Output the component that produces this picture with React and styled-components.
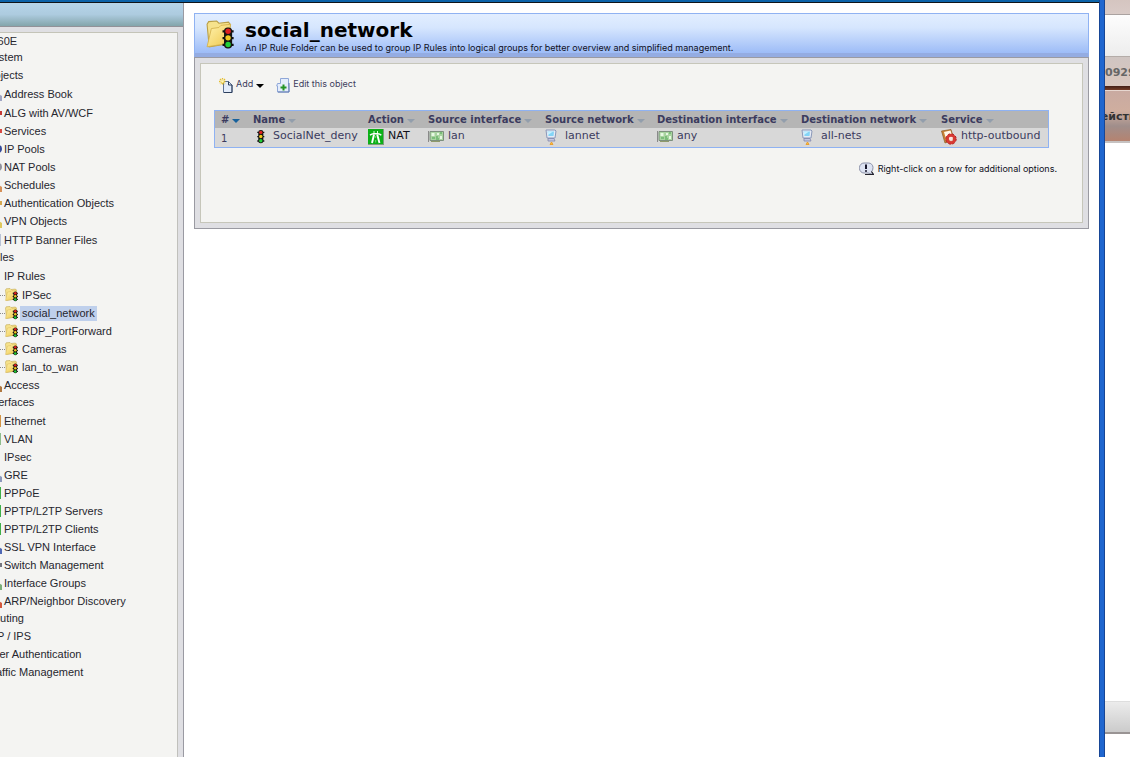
import React from "react";
import styled, { createGlobalStyle } from "styled-components";

const GlobalStyle = createGlobalStyle`
  * { box-sizing: border-box; }
  body {
    margin: 0;
    background: #fff;
    color: #2b2b3c;
    font-family: "Liberation Sans", Arial, sans-serif;
    font-size: 11px;
  }
`;

const Desktop = styled.div`
  display: flex;
  min-height: 100vh;
  overflow: hidden;
`;

const BrowserWindow = styled.div`
  flex: 1;
  min-width: 0;
  display: flex;
  flex-direction: column;
`;

const WindowEdge = styled.div`
  width: 6px;
  flex: none;
  background: #1f66cf;
  border-left: 1px solid #174696;
  border-right: 1px solid #174696;
`;

const TopBar = styled.div`
  height: 3px;
  background: #0b62a8;
  border-bottom: 1px solid #101418;
`;

const Columns = styled.div`
  flex: 1;
  display: flex;
`;

const Sidebar = styled.aside`
  width: 184px;
  flex: none;
  display: flex;
  flex-direction: column;
  overflow: hidden;
  background: #dfdfe3;
  border-right: 1px solid #9a9aa2;
`;

const SidebarHeader = styled.div`
  height: 24px;
  flex: none;
  background: linear-gradient(#b6d5e9, #adcbdf 50%, #83a5ab);
  border-bottom: 1px solid #929298;
`;

const TreePanel = styled.nav`
  flex: 1;
  margin: 5px 5px 0 0;
  padding-top: 1px;
  overflow: hidden;
  background: #f4f4f2;
  border-top: 1px solid #c4c4b8;
  border-right: 1px solid #c0c0bc;
`;

const TreeList = styled.ul`
  list-style: none;
  margin: 0 0 0 -14px;
  padding: 0;
`;

const TreeRow = styled.li`
  display: flex;
  align-items: center;
  height: ${(p) => (p.$root ? 15 : p.$tall ? 19 : 18)}px;
  padding-top: ${(p) => (p.$tall ? 1 : 0)}px;
  padding-bottom: ${(p) => (p.$level === 0 && !p.$root ? 2 : 0)}px;
  margin-left: ${(p) => (p.$root ? -19 : 0)}px;
  white-space: nowrap;
`;

const TreeIcon = styled.span`
  display: flex;
  justify-content: flex-end;
  width: 16px;
  flex: none;
`;

const Branch = styled.span`
  display: flex;
  align-items: center;
  width: 34px;
  flex: none;
  padding-left: 14px;
`;

const Dots = styled.span`
  width: 5px;
  border-top: 1px dotted #8c8c8c;
`;

const TreeLink = styled.a`
  color: #26262e;
  text-decoration: none;
  line-height: 15px;
  padding: 0 2px;
  margin-left: ${(p) => (p.$flush ? -2 : 0)}px;
  background: ${(p) => (p.$selected ? "#bfd0ec" : "transparent")};
`;

const Main = styled.main`
  flex: 1;
  min-width: 0;
  padding: 10px 10px 0;
`;

const PageHeader = styled.header`
  display: flex;
  height: 44px;
  padding: 6px 10px 0 11px;
  gap: 9px;
  border: 1px solid #8fb2f2;
  border-bottom: 4px solid #94ace2;
  background: linear-gradient(#e2eeff, #d6e6fe 35%, #9dbcf7);
`;

const Title = styled.h1`
  margin: 0;
  color: #000;
  font: bold 20px/21px "DejaVu Sans", Verdana, sans-serif;
`;

const Subtitle = styled.p`
  margin: 0;
  color: #10101c;
  font: 9px/13px Inter, "Liberation Sans", sans-serif;
`;

const Frame = styled.section`
  padding: 5px;
  background: #dfdfe3;
  border: 1px solid #9a9aa2;
`;

const Panel = styled.div`
  min-height: 160px;
  padding: 11px 33px 0 13px;
  background: #f4f4f2;
  border: 1px solid #c6c6ba;
`;

const Toolbar = styled.div`
  display: flex;
  gap: 12px;
  padding-left: 5px;
  height: 35px;
`;

const ToolButton = styled.button`
  display: flex;
  align-items: flex-start;
  gap: 3px;
  height: 18px;
  margin: 0;
  padding: 0;
  border: 0;
  background: none;
  color: #3c3c5c;
  font: 9px/18px Inter, "Liberation Sans", sans-serif;

  svg { margin-top: 3px; }
  svg + svg { margin-top: 7px; }
`;

const RuleTable = styled.table`
  width: 100%;
  table-layout: fixed;
  border: 1px solid #8fb2f2;
  border-collapse: separate;
  border-spacing: 0;
  white-space: nowrap;
`;

const Col = styled.col`
  width: ${(p) => (p.$w ? `${p.$w}px` : "auto")};
`;

const HeadCell = styled.th`
  height: 17px;
  padding: 0 0 0 6px;
  background: #b5b5b5;
  text-align: left;
`;

const SortButton = styled.button`
  display: flex;
  align-items: center;
  gap: 3px;
  padding: 0;
  border: 0;
  background: none;
  color: #3b3b5e;
  font: bold 10px/16px "DejaVu Sans", Verdana, sans-serif;
`;

const Cell = styled.td`
  height: 19px;
  padding: 0 0 0 6px;
  vertical-align: ${(p) => (p.$low ? "bottom" : "top")};
  background: #d8d8d8;
  color: ${(p) => (p.$dark ? "#101018" : "#3b3b5e")};
  font: ${(p) => (p.$low ? 10 : 11)}px/16px "DejaVu Sans", Verdana, sans-serif;
`;

const CellBody = styled.div`
  display: flex;
  align-items: flex-start;
  gap: ${(p) => p.$gap || 4}px;
  height: 18px;

  svg { margin-top: 1px; }
`;

const Hint = styled.p`
  display: flex;
  align-items: center;
  justify-content: flex-end;
  gap: 4px;
  margin: 13px -8px 0 0;
  color: #10101c;
  font: 9px/16px Inter, "Liberation Sans", sans-serif;
`;

const BehindPage = styled.aside`
  width: 25px;
  flex: none;
  overflow: hidden;
  display: flex;
  flex-direction: column;
  white-space: nowrap;
`;

const SkyStrip = styled.div`
  height: 15px;
  background: linear-gradient(#d5c5c0, #d9cbc7);
  border-bottom: 1px solid #aaa2a0;
`;

const LightStrip = styled.div`
  height: 42px;
  background: linear-gradient(#fdfdfd, #ededed);
  border-bottom: 1px solid #b4aca8;
`;

const PhoneStrip = styled.div`
  height: 29px;
  color: #666;
  background: linear-gradient(#cfc5c2, #dac7be);
  font: bold 11px/32px "DejaVu Sans", Verdana, sans-serif;
`;

const DarkStrip = styled.div`
  height: 5px;
  background: linear-gradient(#431f16, #753c26);
  border-bottom: 1px solid #e7d7d0;
`;

const MenuStrip = styled.div`
  height: 52px;
  display: flex;
  color: #333;
  background: linear-gradient(#c9aaa1, #cfae9f 40%, #a08e8b 70%, #b58370);
  border-bottom: 2px solid #c6c2c1;
  font: bold 11px/52px "DejaVu Sans", Verdana, sans-serif;
`;

const MenuText = styled.span`
  margin-left: -14px;
`;

const Blank = styled.div`
  flex: 1;
`;

const FooterStrip = styled.div`
  height: 33px;
  margin-bottom: 23px;
  background: linear-gradient(#ececec, #cbcbcb);
  border-top: 1px solid #dedede;
  border-bottom: 2px solid #999494;
`;

function Lights({ x = 0, y = 0, s = 1 }) {
  return (
    <g transform={`translate(${x} ${y}) scale(${s})`}>
      <path d="M.3 2.500h7.400M.3 7h7.400M.3 11.500h7.400" stroke="#111" strokeWidth="1.500" />
      <rect x="1.300" y="0" width="5.400" height="14" rx="2.500" fill="#151510" />
      <circle cx="4" cy="2.500" r="1.800" fill="#e02020" />
      <circle cx="4" cy="6.900" r="1.800" fill="#f0c820" />
      <circle cx="4" cy="11.300" r="1.800" fill="#22d038" />
    </g>
  );
}

function FolderIcon({ size }) {
  return (
    <svg width={size} height={size} viewBox="0 0 28 28">
      <defs>
        <linearGradient id="folder" x1="0" y1="0" x2="1" y2="1">
          <stop offset="0" stopColor="#fff3b0" />
          <stop offset="1" stopColor="#eec648" />
        </linearGradient>
      </defs>
      <path d="M1 4 2.500 1.500 10 1l2 2 9-1 1.500 2-1 18L3 25z" fill="#f6e28c" stroke="#b99e45" />
      <path d="M1 25 5 8l7-1 2-2 9-1-3 18z" fill="url(#folder)" stroke="#d3b14c" strokeWidth=".8" />
      <Lights x={15} y={7} s={1.400} />
    </svg>
  );
}

function TrafficIcon() {
  return (
    <svg width="16" height="16" viewBox="0 0 16 16">
      <Lights x={4} y={1} s={0.950} />
    </svg>
  );
}

function NatIcon() {
  return (
    <svg width="16" height="16" viewBox="0 0 16 16">
      <rect width="16" height="16" fill="#7c9c7c" />
      <rect width="15" height="15" fill="#0db018" />
      <path d="M6 5.500 4 14M9.200 5.500 11.500 14" stroke="#fff" strokeWidth="1.900" />
      <path d="M2 6.200q2-1.500 3.500-1.500h4.300q2 0 3.500 1.500" fill="none" stroke="#fff" strokeWidth="1.500" />
      <path d="M6 2v2M9.500 2v2" stroke="#d7ffd7" />
      <path d="M7.700 7v2M7.700 11v2.500" stroke="#6fd873" />
    </svg>
  );
}

function CardIcon() {
  return (
    <svg width="16" height="14" viewBox="0 0 16 14">
      <path d="M.5 2v11" stroke="#8a8a8a" />
      <path d="M2 2.500h13.500v9H2z" fill="#a9d4a0" stroke="#7d907d" />
      <path d="M3.500 4h3v3h-3zM9 4h2v2H9zM12 7h2v3h-2z" fill="#e7f8e2" />
      <path d="M4 9h3M8 8h2M8 10h3M12 4h2" stroke="#4fa552" strokeWidth="1.200" />
      <path d="M3 12.500h9" stroke="#8f9a6a" />
    </svg>
  );
}

function NetworkIcon() {
  return (
    <svg width="12" height="16" viewBox="0 0 12 16">
      <path d="M1 1h9l1 1-1 7H2z" fill="#e6ebf5" stroke="#8a98b8" />
      <path d="M2.500 2.500H9L8.500 7h-5z" fill="#83d4f6" />
      <path d="M3 6 8 2.500H3z" fill="#c6f0ff" />
      <path d="M3 9.500h6l1 2.500H3z" fill="#c3c7e0" stroke="#8085ac" strokeWidth=".8" />
      <path d="M5 15.500 6.500 13 8 15.500z" fill="#ffc83c" stroke="#e79420" strokeWidth=".8" />
    </svg>
  );
}

function ServiceIcon() {
  return (
    <svg width="16" height="16" viewBox="0 0 16 16">
      <path d="M.5 2 10 .5l3 10L4 14z" fill="#c98536" stroke="#8a5a28" strokeWidth=".7" />
      <path d="M3 3 9.500 1.500 12 9l-6.500 2.500z" fill="#fff8ea" />
      <circle cx="10" cy="10" r="3.700" fill="none" stroke="#d83a34" strokeWidth="3" />
      <circle cx="10" cy="10" r="5.200" fill="none" stroke="#b32525" strokeWidth="1" strokeDasharray="2.400 1.700" />
      <circle cx="10" cy="10" r="1.900" fill="#fbe4e0" />
    </svg>
  );
}

function HintIcon() {
  return (
    <svg width="15" height="14" viewBox="0 0 15 14">
      <path d="M5 1h4.500A4.500 4.500 0 0 1 14 5.500q0 3-1.500 4l2 3L9 11H5A4.500 4.500 0 0 1 .5 6.500v-1A4.500 4.500 0 0 1 5 1z" fill="#dde3f2" stroke="#8b91a8" />
      <path d="M6 12.500h8.500l-2-3" fill="none" stroke="#22222c" strokeWidth="1.200" />
      <path d="M7 2.500v4.500M7 8.200v1.600" stroke="#15152a" strokeWidth="2" />
    </svg>
  );
}

function AddIcon() {
  return (
    <svg width="14" height="15" viewBox="0 0 14 15">
      <path d="M4.500 3.500h5l3.500 3.500v7.500H4.500z" fill="#e3ecfa" stroke="#5d7192" />
      <path d="M9.500 3.500V7H13v7.500H5" fill="none" stroke="#2c3f5c" />
      <path d="M3.500 0v7M0 3.500h7M1 1l5 5M6 1 1 6" stroke="#e4bd2c" strokeWidth="1.300" strokeDasharray="1.500 .7" />
      <circle cx="3.500" cy="3.500" r="1.300" fill="#fff8b8" />
    </svg>
  );
}

function EditIcon() {
  return (
    <svg width="14" height="15" viewBox="0 0 14 15">
      <path d="M4.500.5h8v3.500l.5 10H1.500V8H.7L1.500 5.500h3z" fill="#e4edfc" stroke="#8fa7d8" />
      <path d="M2 14h11V5" fill="none" stroke="#5f79b0" />
      <path d="M7.500 6.500v6M4.500 9.500h6" stroke="#259425" strokeWidth="2" />
    </svg>
  );
}

function Arrow({ color }) {
  return (
    <svg width="8" height="6" viewBox="0 0 8 6">
      <path d="M0 2h8L4 6z" fill={color} />
    </svg>
  );
}

function EdgeIcon({ color, kind }) {
  const shapes = {
    foot: <path d="M13 8 16 10v5h-4z" />,
    box: <rect x="10" y="2" width="5" height="12" />,
    dot: <circle cx="12" cy="8" r="4" />,
    small: <path d="M12 6h4v4h-4z" />,
  };
  return (
    <svg width="16" height="16" viewBox="0 0 16 16" fill={color}>
      {shapes[kind]}
    </svg>
  );
}

const tree = [
  { label: "DFL-260E", level: 0, root: true },
  { label: "System", level: 0 },
  { label: "Objects", level: 0 },
  { label: "Address Book", color: "#a0a5c4", kind: "foot" },
  { label: "ALG with AV/WCF", color: "#c63a34", kind: "small", tall: true },
  { label: "Services", color: "#d84a42", kind: "small" },
  { label: "IP Pools", color: "#344a9a", kind: "dot" },
  { label: "NAT Pools", color: "#92929c", kind: "dot" },
  { label: "Schedules", color: "#d69058", kind: "foot" },
  { label: "Authentication Objects", color: "#d6a850", kind: "small" },
  { label: "VPN Objects", color: "#dfc85c", kind: "foot" },
  { label: "HTTP Banner Files", color: "#b9c3d6", kind: "box", tall: true },
  { label: "Rules", level: 0 },
  { label: "IP Rules" },
  { label: "IPSec", level: 2, tall: true },
  { label: "social_network", level: 2, selected: true },
  { label: "RDP_PortForward", level: 2 },
  { label: "Cameras", level: 2 },
  { label: "lan_to_wan", level: 2 },
  { label: "Access", color: "#b07840", kind: "foot" },
  { label: "Interfaces", level: 0 },
  { label: "Ethernet", color: "#d39445", kind: "box" },
  { label: "VLAN", color: "#8fbd8c", kind: "box" },
  { label: "IPsec" },
  { label: "GRE", color: "#8c98bc", kind: "foot" },
  { label: "PPPoE", color: "#3fae48", kind: "box" },
  { label: "PPTP/L2TP Servers", color: "#3fae48", kind: "box" },
  { label: "PPTP/L2TP Clients", color: "#3fae48", kind: "box" },
  { label: "SSL VPN Interface", color: "#4f68b4", kind: "foot" },
  { label: "Switch Management", color: "#74747c", kind: "small" },
  { label: "Interface Groups", color: "#7cae78", kind: "foot" },
  { label: "ARP/Neighbor Discovery", color: "#d4583c", kind: "foot" },
  { label: "Routing", level: 0 },
  { label: "IDP / IPS", level: 0 },
  { label: "User Authentication", level: 0 },
  { label: "Traffic Management", level: 0 },
];

const columns = [
  { label: "#", width: 32 },
  { label: "Name", width: 115 },
  { label: "Action", width: 60 },
  { label: "Source interface", width: 117 },
  { label: "Source network", width: 112 },
  { label: "Destination interface", width: 144 },
  { label: "Destination network", width: 140 },
  { label: "Service" },
];

function TreeNode({ label, level = 1, root, tall, color, kind, selected }) {
  return (
    <TreeRow $level={level} $root={root} $tall={tall}>
      {level === 1 && (
        <TreeIcon>{kind && <EdgeIcon color={color} kind={kind} />}</TreeIcon>
      )}
      {level === 2 && (
        <Branch>
          <Dots />
          <FolderIcon size={14} />
        </Branch>
      )}
      <TreeLink href="#" $selected={selected} $flush={level === 0}>
        {label}
      </TreeLink>
    </TreeRow>
  );
}

export default function App() {
  return (
    <Desktop>
      <GlobalStyle />
      <BrowserWindow>
        <TopBar />
        <Columns>
          <Sidebar>
            <SidebarHeader />
            <TreePanel>
              <TreeList>
                {tree.map((node) => (
                  <TreeNode key={node.label} {...node} />
                ))}
              </TreeList>
            </TreePanel>
          </Sidebar>
          <Main>
            <PageHeader>
              <FolderIcon size={30} />
              <div>
                <Title>social_network</Title>
                <Subtitle>
                  An IP Rule Folder can be used to group IP Rules into logical groups for better overview and simplified management.
                </Subtitle>
              </div>
            </PageHeader>
            <Frame>
              <Panel>
                <Toolbar>
                  <ToolButton type="button">
                    <AddIcon />
                    Add
                    <Arrow color="#000" />
                  </ToolButton>
                  <ToolButton type="button">
                    <EditIcon />
                    Edit this object
                  </ToolButton>
                </Toolbar>
                <RuleTable>
                  <colgroup>
                    {columns.map((c) => (
                      <Col key={c.label} $w={c.width} />
                    ))}
                  </colgroup>
                  <thead>
                    <tr>
                      {columns.map((c, i) => (
                        <HeadCell key={c.label}>
                          <SortButton type="button">
                            {c.label}
                            <Arrow color={i === 0 ? "#17619c" : "#929eac"} />
                          </SortButton>
                        </HeadCell>
                      ))}
                    </tr>
                  </thead>
                  <tbody>
                    <tr>
                      <Cell $low>1</Cell>
                      <Cell><CellBody><TrafficIcon />SocialNet_deny</CellBody></Cell>
                      <Cell $dark><CellBody><NatIcon />NAT</CellBody></Cell>
                      <Cell><CellBody><CardIcon />lan</CellBody></Cell>
                      <Cell><CellBody $gap={8}><NetworkIcon />lannet</CellBody></Cell>
                      <Cell><CellBody><CardIcon />any</CellBody></Cell>
                      <Cell><CellBody $gap={8}><NetworkIcon />all-nets</CellBody></Cell>
                      <Cell><CellBody><ServiceIcon />http-outbound</CellBody></Cell>
                    </tr>
                  </tbody>
                </RuleTable>
                <Hint>
                  <HintIcon />
                  Right-click on a row for additional options.
                </Hint>
              </Panel>
            </Frame>
          </Main>
        </Columns>
      </BrowserWindow>
      <WindowEdge />
      <BehindPage>
        <SkyStrip />
        <LightStrip />
        <PhoneStrip>0929</PhoneStrip>
        <DarkStrip />
        <MenuStrip>
          <MenuText>Действия</MenuText>
        </MenuStrip>
        <Blank />
        <FooterStrip />
      </BehindPage>
    </Desktop>
  );
}
